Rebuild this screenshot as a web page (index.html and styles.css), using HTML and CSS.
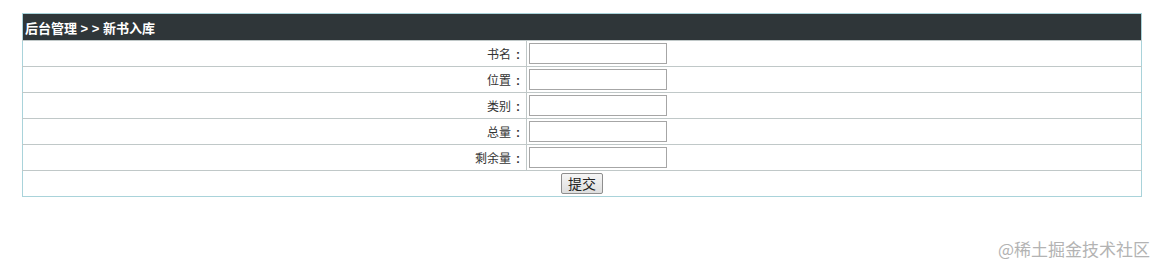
FILE: index.html
```html
<!DOCTYPE html>
<html lang="zh-CN">
  <head>
    <meta charset="UTF-8" />
    <title>新书入库</title>
    <link rel="stylesheet" href="styles.css">
  </head>
  <body>
    <form class="book-form">
      <table class="form-table">
        <tr>
          <th colspan="2" class="title">后台管理 &gt; &gt; 新书入库</th>
        </tr>
        <tr>
          <td class="label">书名<span class="colon">:</span></td>
          <td><input type="text" name="name"></td>
        </tr>
        <tr>
          <td class="label">位置<span class="colon">:</span></td>
          <td><input type="text" name="place"></td>
        </tr>
        <tr>
          <td class="label">类别<span class="colon">:</span></td>
          <td><input type="text" name="type"></td>
        </tr>
        <tr>
          <td class="label">总量<span class="colon">:</span></td>
          <td><input type="text" name="total"></td>
        </tr>
        <tr>
          <td class="label">剩余量<span class="colon">:</span></td>
          <td><input type="text" name="remain"></td>
        </tr>
        <tr>
          <td colspan="2" class="actions"><button type="submit">提交</button></td>
        </tr>
      </table>
    </form>
    <div class="watermark">@稀土掘金技术社区</div>
  </body>
</html>
```

FILE: styles.css
```css
html {
  font-size: 12px;
}

body {
  margin: 0;
  padding: 13px 16px 0 22px;
  background: #fff;
  color: #333;
  font-family: "Liberation Sans", "Noto Sans CJK SC", sans-serif;
}

* {
  box-sizing: border-box;
}

.form-table {
  width: 100%;
  border-collapse: collapse;
  border: 1px solid #a9d3da;
}

.form-table td {
  height: 26px;
  padding: 0 2px;
  border-top: 1px solid #c0c8c8;
  font-size: 12px;
}

.title {
  height: 27px;
  padding: 0 2px;
  background: #2f3639;
  color: #fff;
  font-size: 13px;
  font-weight: bold;
  text-align: left;
}

.form-table td.label {
  width: 504px;
  text-align: right;
  border-right: 1px solid #c0c8c8;
}

.colon {
  padding: 0 4px 0 5px;
  font-weight: bold;
}

input {
  display: block;
  width: 138px;
  height: 21px;
  margin: 0;
  border: 1px solid #a6a6a6;
}

.actions {
  text-align: center;
}

button {
  height: 21px;
  padding: 0 6px;
  font-family: "Noto Sans CJK SC", sans-serif;
  font-size: 14px;
  line-height: 17px;
  color: #222;
  background: linear-gradient(#f6f6f6, #dedede);
  border: 1px solid #8e8e8e;
  border-radius: 2px;
}

.watermark {
  position: absolute;
  right: 8px;
  top: 236px;
  color: #b3b3b3;
  font-family: "Noto Sans CJK SC", sans-serif;
  font-size: 17px;
}
```
